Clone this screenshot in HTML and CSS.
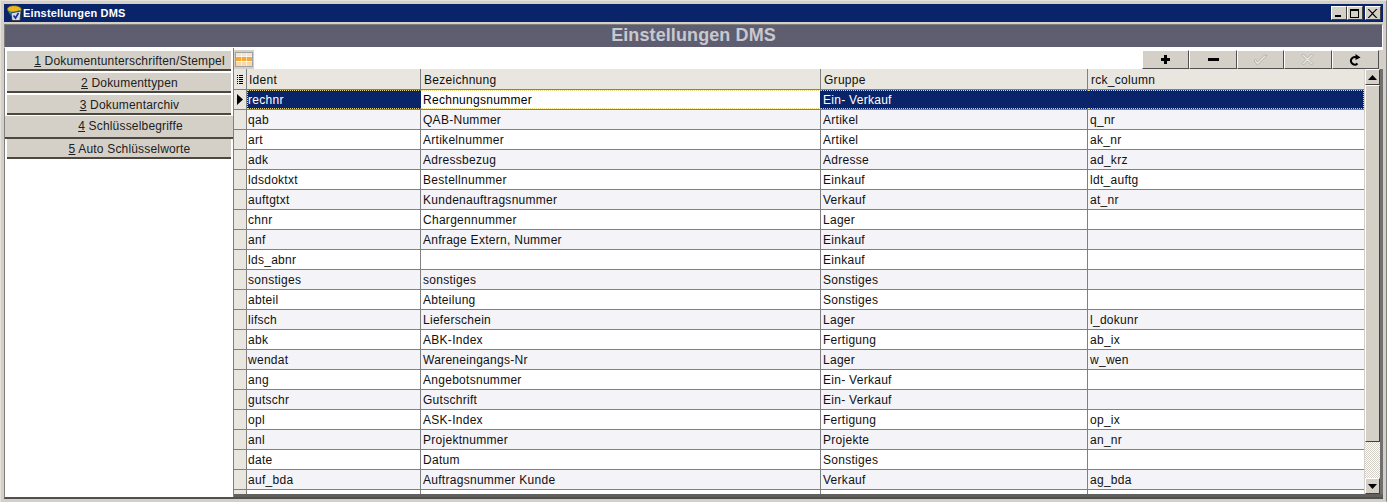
FILE: index.html
```html
<!DOCTYPE html>
<html lang="de">
<head>
<meta charset="utf-8">
<title>Einstellungen DMS</title>
<link rel="stylesheet" href="styles.css">
</head>
<body>
<div class="window">
  <div class="titlebar">
    <svg class="appicon" width="16" height="16" viewBox="0 0 16 16"><path d="M0 4C1 1 6 0 10 1s5 3 4 5l-1 3H3z" fill="#e8b820" stroke="#705008" stroke-width=".7"/><path d="M1 5c3 2 7 2 11 0l2 2-1 4-8 1z" fill="#38a058"/><path d="M2 7c3 1 7 1 11-1v3l-9 2z" fill="#2878c8"/><path d="M4 8l10-2-1 9.500H5z" fill="#d8d8e8" stroke="#303030" stroke-width=".8"/><path d="M6.500 10.500l2 2.500 3-5" fill="none" stroke="#1030a0" stroke-width="1.600"/></svg>
    <span class="title">Einstellungen DMS</span>
    <div class="winbtns">
      <button class="winbtn"><svg width="10" height="9" viewBox="0 0 10 9"><rect x="1" y="6" width="6" height="2" fill="#000"/></svg></button>
      <button class="winbtn"><svg width="10" height="9" viewBox="0 0 10 9"><path d="M0 0h9v9H0zM1 2v6h7V2z" fill="#000" fill-rule="evenodd"/></svg></button>
      <button class="winbtn closebtn"><svg width="10" height="9" viewBox="0 0 10 9"><path d="M1 0l3.500 3.500L8 0h1.500L5.200 4.500 9.500 9H8L4.500 5.500 1 9H-.5l4.300-4.500L-.5 0z" fill="#000"/></svg></button>
    </div>
  </div>
  <div class="heading">Einstellungen DMS</div>
  <div class="content">
    <nav class="tabs">
      <div class="tab"><u>1</u> Dokumentunterschriften/Stempel</div>
      <div class="tab"><u>2</u> Dokumenttypen</div>
      <div class="tab"><u>3</u> Dokumentarchiv</div>
      <div class="tab tab-active"><u>4</u> Schlüsselbegriffe</div>
      <div class="tab"><u>5</u> Auto Schlüsselworte</div>
    </nav>
    <div class="gridpane">
      <div class="toolbar">
        <div class="tableicon"><svg width="18" height="15" viewBox="0 0 18 15"><rect x="0" y="0" width="18" height="15" fill="#f2e6d0"/><rect x="1" y="5" width="16" height="4" fill="#f4a838"/><rect x="1" y="10" width="16" height="4" fill="#f8d8a8"/><path d="M6.500 1v13M11.500 1v13" stroke="#fff" stroke-opacity=".55"/><path d="M1 4.500h16M1 9.500h16" stroke="#fff" stroke-opacity=".6"/><path d="M0 .5h18M.5 0v15M17.500 0v15M0 14.500h18" stroke="#a0a0a8"/></svg></div>
        <div class="searchspace"></div>
        <div class="toolbtns">
          <button class="toolbtn"><svg width="11" height="11" viewBox="0 0 11 11"><path d="M4 1h3v3h3v3H7v3H4V7H1V4h3z" fill="#000"/></svg></button>
          <button class="toolbtn"><svg width="11" height="11" viewBox="0 0 11 11"><rect x="0" y="4" width="11" height="3" fill="#000"/></svg></button>
          <button class="toolbtn"><svg width="15" height="12" viewBox="0 0 15 12"><path d="M1 7l3.500 4L14 1.500 11.500 1 4.500 8 2.500 5.500z" fill="#e8e6e0" stroke="#a8a8a0" stroke-width=".8"/></svg></button>
          <button class="toolbtn"><svg width="13" height="13" viewBox="0 0 13 13"><path d="M2.500 1L6.500 5 10.500 1 12 2.500 8 6.500 12 10.500 10.500 12 6.500 8 2.500 12 1 10.500 5 6.500 1 2.500z" fill="#e8e6e0" stroke="#a8a8a0" stroke-width=".8"/></svg></button>
          <button class="toolbtn"><svg width="12" height="12" viewBox="0 0 12 12"><path d="M8.500 9.500A3.800 3.800 0 1 1 7 3.200" fill="none" stroke="#000" stroke-width="2"/><path d="M6.500 0l5 3.500-5 2.500z" fill="#000"/></svg></button>
        </div>
      </div>
      <div class="gridbody">
        <div class="table">
          <div class="row header">
            <div class="ind"><svg width="8" height="9" viewBox="0 0 8 9"><path d="M1 0h1v1H1zM3 0h4v1H3zM1 2h1v1H1zM3 2h4v1H3zM1 4h1v1H1zM3 4h4v1H3zM1 6h1v1H1zM3 6h4v1H3zM1 8h1v1H1zM3 8h4v1H3z" fill="#000"/></svg></div>
            <div class="cell">Ident</div><div class="cell">Bezeichnung</div><div class="cell">Gruppe</div><div class="cell">rck_column</div>
          </div>
          <div class="row selected">
            <div class="ind"><svg width="6" height="11" viewBox="0 0 6 11"><path d="M0 0l6 5.500L0 11z" fill="#000"/></svg></div>
            <div class="cell">rechnr</div><div class="cell focus">Rechnungsnummer</div><div class="cell">Ein- Verkauf</div><div class="cell"></div>
          </div>
          <div class="row alt"><div class="ind"></div><div class="cell">qab</div><div class="cell">QAB-Nummer</div><div class="cell">Artikel</div><div class="cell">q_nr</div></div>
          <div class="row"><div class="ind"></div><div class="cell">art</div><div class="cell">Artikelnummer</div><div class="cell">Artikel</div><div class="cell">ak_nr</div></div>
          <div class="row alt"><div class="ind"></div><div class="cell">adk</div><div class="cell">Adressbezug</div><div class="cell">Adresse</div><div class="cell">ad_krz</div></div>
          <div class="row"><div class="ind"></div><div class="cell">ldsdoktxt</div><div class="cell">Bestellnummer</div><div class="cell">Einkauf</div><div class="cell">ldt_auftg</div></div>
          <div class="row alt"><div class="ind"></div><div class="cell">auftgtxt</div><div class="cell">Kundenauftragsnummer</div><div class="cell">Verkauf</div><div class="cell">at_nr</div></div>
          <div class="row"><div class="ind"></div><div class="cell">chnr</div><div class="cell">Chargennummer</div><div class="cell">Lager</div><div class="cell"></div></div>
          <div class="row alt"><div class="ind"></div><div class="cell">anf</div><div class="cell">Anfrage Extern, Nummer</div><div class="cell">Einkauf</div><div class="cell"></div></div>
          <div class="row"><div class="ind"></div><div class="cell">lds_abnr</div><div class="cell"></div><div class="cell">Einkauf</div><div class="cell"></div></div>
          <div class="row alt"><div class="ind"></div><div class="cell">sonstiges</div><div class="cell">sonstiges</div><div class="cell">Sonstiges</div><div class="cell"></div></div>
          <div class="row"><div class="ind"></div><div class="cell">abteil</div><div class="cell">Abteilung</div><div class="cell">Sonstiges</div><div class="cell"></div></div>
          <div class="row alt"><div class="ind"></div><div class="cell">lifsch</div><div class="cell">Lieferschein</div><div class="cell">Lager</div><div class="cell">l_dokunr</div></div>
          <div class="row"><div class="ind"></div><div class="cell">abk</div><div class="cell">ABK-Index</div><div class="cell">Fertigung</div><div class="cell">ab_ix</div></div>
          <div class="row alt"><div class="ind"></div><div class="cell">wendat</div><div class="cell">Wareneingangs-Nr</div><div class="cell">Lager</div><div class="cell">w_wen</div></div>
          <div class="row"><div class="ind"></div><div class="cell">ang</div><div class="cell">Angebotsnummer</div><div class="cell">Ein- Verkauf</div><div class="cell"></div></div>
          <div class="row alt"><div class="ind"></div><div class="cell">gutschr</div><div class="cell">Gutschrift</div><div class="cell">Ein- Verkauf</div><div class="cell"></div></div>
          <div class="row"><div class="ind"></div><div class="cell">opl</div><div class="cell">ASK-Index</div><div class="cell">Fertigung</div><div class="cell">op_ix</div></div>
          <div class="row alt"><div class="ind"></div><div class="cell">anl</div><div class="cell">Projektnummer</div><div class="cell">Projekte</div><div class="cell">an_nr</div></div>
          <div class="row"><div class="ind"></div><div class="cell">date</div><div class="cell">Datum</div><div class="cell">Sonstiges</div><div class="cell"></div></div>
          <div class="row alt"><div class="ind"></div><div class="cell">auf_bda</div><div class="cell">Auftragsnummer Kunde</div><div class="cell">Verkauf</div><div class="cell">ag_bda</div></div>
          <div class="row"><div class="ind"></div><div class="cell"></div><div class="cell"></div><div class="cell"></div><div class="cell"></div></div>
        </div>
        <div class="scrollbar">
          <button class="sbtn"><svg width="9" height="5" viewBox="0 0 9 5"><path d="M4.500 0L9 5H0z" fill="#000"/></svg></button>
          <div class="thumb"></div>
          <div class="track"></div>
          <button class="sbtn"><svg width="9" height="5" viewBox="0 0 9 5"><path d="M4.500 5L9 0H0z" fill="#000"/></svg></button>
        </div>
      </div>
    </div>
  </div>
</div>
</body>
</html>
```
FILE: styles.css
```css
* { box-sizing: border-box; }
html, body { margin: 0; padding: 0; }
body { width: 1387px; height: 502px; overflow: hidden; background: #d4d0c8; font-family: "Liberation Sans", Arial, sans-serif; font-size: 12px; color: #000; }
button { margin: 0; padding: 0; font: inherit; }
.window { height: 502px; padding: 4px 4px 2px; border: 1px solid #e4e2da; border-right-color: #808080; border-bottom-color: #d4d0c8; display: flex; flex-direction: column; }
.titlebar { height: 18px; margin: -1px -1px 0; flex: none; background: #0a246a; display: flex; align-items: center; padding: 0 2px 0 3px; color: #fff; }
.appicon { flex: none; }
.title { font-size: 11px; font-weight: bold; letter-spacing: .17px; }
.winbtns { margin-left: auto; display: flex; }
.winbtn { width: 16px; height: 14px; background: #d4d0c8; border: 1px solid; border-color: #fff #404040 #404040 #fff; display: flex; align-items: center; justify-content: center; }
.closebtn { margin-left: 2px; }
.heading { flex: none; height: 24px; margin: 2px -1px 0; background: #5e5e70; border: 1px solid; border-color: #808080 #fff #fff #808080; color: #c8c8d0; font-size: 18px; font-weight: bold; letter-spacing: .1px; text-align: center; line-height: 21px; }
.content { flex: 1; min-height: 0; display: flex; margin: 0 -1px; background: #fff; border-bottom: 2px solid #505050; border-left: 1px solid #808080; }
.tabs { width: 228px; flex: none; padding-top: 3px; display: flex; flex-direction: column; gap: 2px; background: #fff; }
.tab { height: 20px; margin-left: 2px; width: 224px; padding-left: 21px; background: #d4d0c8; border-bottom: 2px solid #4c4840; text-align: center; line-height: 20px; color: #202020; letter-spacing: .18px; }
.tab-active { height: 24px; margin: -2px -1px -2px 0; width: 228px; padding-left: 23px; border-top: 1px solid #fff; line-height: 21px; }
.gridpane { flex: 1; min-width: 0; display: flex; flex-direction: column; border-left: 1px solid #808080; padding-top: 2px; background: #fff; }
.toolbar { height: 19px; flex: none; display: flex; background: #fff; }
.tableicon { width: 20px; display: flex; align-items: center; justify-content: center; background: #d4d0c8; }
.searchspace { flex: 1; background: #fff; }
.toolbtns { display: flex; width: 241px; padding-right: 4px; background: #d4d0c8; }
.toolbtn { flex: 1; background: #d4d0c8; border: 1px solid; border-color: #fff #505050 #505050 #fff; display: flex; align-items: center; justify-content: center; }
.gridbody { flex: 1; min-height: 0; display: flex; background: #d4d0c8; border-bottom: 3px solid #606060; }
.table { width: 1130px; flex: none; overflow: hidden; background: #fff; }
.row { display: grid; grid-template-columns: 13px 174px 400px 267px 276px; height: 20px; border-bottom: 1px solid #808080; color: #101010; background: #fff; }
.row.alt { background: #f3f3f8; }
.row .ind { background: #e8e6de; border-right: 1px solid #808080; display: flex; align-items: center; justify-content: center; }
.cell { border-right: 1px solid #808080; padding: 0 2px; line-height: 21px; white-space: nowrap; overflow: hidden; letter-spacing: .28px; }
.cell:nth-child(2) { padding-left: 1px; }
.row .cell:last-child { border-right: 0; }
.header { background: #e8e6de; height: 21px; }
.header .cell { padding-left: 3px; line-height: 22px; }
.header .cell:nth-child(2) { padding-left: 2px; }
.selected { background: #0a246a; color: #fff; }
.selected .cell { border-top: 1px dotted #e8d880; border-bottom: 1px dotted #e8d880; border-right-color: #0a246a; line-height: 19px; }
.selected .cell:nth-child(2) { border-left: 1px dotted #e8d880; padding-left: 0; }
.selected .focus { background: #fff; color: #000; }
.selected .cell:last-child { border-right: 1px dotted #e8d880; }
.scrollbar { width: 19px; flex: none; display: flex; flex-direction: column; border-right: 3px solid #707070; padding-left: 1px; }
.sbtn { height: 16px; flex: none; background: #d4d0c8; border: 1px solid; border-color: #fff #404040 #404040 #fff; display: flex; align-items: center; justify-content: center; }
.thumb { height: 357px; flex: none; background: #d4d0c8; border: 1px solid; border-color: #fff #404040 #404040 #fff; }
.track { flex: 1; background: repeating-conic-gradient(#d4d0c8 0 25%, #fff 0 50%) 0 0 / 2px 2px; }
```
